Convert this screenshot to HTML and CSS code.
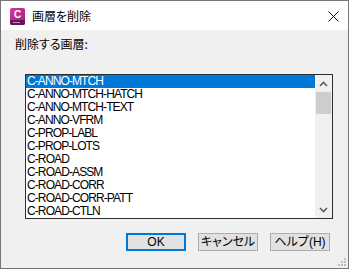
FILE: index.html
```html
<!DOCTYPE html>
<html lang="ja">
<head>
<meta charset="utf-8">
<title>画層を削除</title>
<link rel="stylesheet" href="styles.css">
</head>
<body>
<div class="window">
  <div class="titlebar">
    <svg class="app-icon" width="15" height="17" viewBox="0 0 15 17">
      <defs>
        <linearGradient id="g" x1="0" y1="0" x2="1" y2="1">
          <stop offset="0" stop-color="#d0399a"/>
          <stop offset="1" stop-color="#9b2379"/>
        </linearGradient>
      </defs>
      <rect x="0" y="0" width="15" height="17" rx="2" fill="url(#g)"/>
      <path d="M0 12 H15 V15 A2 2 0 0 1 13 17 H2 A2 2 0 0 1 0 15 Z" fill="#6e1558"/>
      <rect x="3" y="14" width="7" height="1" fill="#c98ab7"/>
      <text x="7.5" y="10" text-anchor="middle" class="icon-letter">C</text>
    </svg>
    <span class="title">画層を削除</span>
    <svg class="close" width="11" height="11" viewBox="0 0 11 11">
      <path d="M0.5 0.5 L10.5 10.5 M10.5 0.5 L0.5 10.5" stroke="#111" stroke-width="1" fill="none"/>
    </svg>
  </div>
  <div class="content">
    <div class="label">削除する画層:</div>
    <div class="listbox">
      <div class="rows">
        <div class="row selected">C-ANNO-MTCH</div>
        <div class="row">C-ANNO-MTCH-HATCH</div>
        <div class="row">C-ANNO-MTCH-TEXT</div>
        <div class="row">C-ANNO-VFRM</div>
        <div class="row">C-PROP-LABL</div>
        <div class="row">C-PROP-LOTS</div>
        <div class="row">C-ROAD</div>
        <div class="row">C-ROAD-ASSM</div>
        <div class="row">C-ROAD-CORR</div>
        <div class="row">C-ROAD-CORR-PATT</div>
        <div class="row">C-ROAD-CTLN</div>
      </div>
      <div class="scrollbar">
        <div class="sb-btn">
          <svg width="9" height="6" viewBox="0 0 9 6"><path d="M1 5 L4.5 1.5 L8 5" stroke="#606060" stroke-width="1.6" fill="none"/></svg>
        </div>
        <div class="sb-track"><div class="sb-thumb"></div></div>
        <div class="sb-btn">
          <svg width="9" height="6" viewBox="0 0 9 6"><path d="M1 1 L4.5 4.5 L8 1" stroke="#606060" stroke-width="1.6" fill="none"/></svg>
        </div>
      </div>
    </div>
    <div class="buttons">
      <div class="btn default">OK</div>
      <div class="btn">キャンセル</div>
      <div class="btn">ヘルプ(H)</div>
    </div>
  </div>
  <svg class="grip" width="9" height="9" viewBox="0 0 9 9">
    <rect x="6" y="0" width="2" height="2" fill="#bdbdbd"/>
    <rect x="3" y="3" width="2" height="2" fill="#bdbdbd"/>
    <rect x="6" y="3" width="2" height="2" fill="#bdbdbd"/>
    <rect x="0" y="6" width="2" height="2" fill="#bdbdbd"/>
    <rect x="3" y="6" width="2" height="2" fill="#bdbdbd"/>
    <rect x="6" y="6" width="2" height="2" fill="#bdbdbd"/>
  </svg>
</div>
</body>
</html>
```
FILE: styles.css
```css
* { box-sizing: border-box; }
html, body { margin: 0; padding: 0; background: #f0f0f0; }
body {
  font-family: "Noto Sans CJK JP", "Liberation Sans", sans-serif;
  font-size: 12px;
  color: #000;
}
.window {
  position: relative;
  width: 349px;
  height: 269px;
  border: 1px solid #777;
  display: flex;
  flex-direction: column;
  background: #f0f0f0;
}
.titlebar {
  height: 29px;
  background: #fff;
  display: flex;
  align-items: center;
  padding-left: 9px;
  padding-right: 9px;
}
.app-icon { flex: none; margin-top: 1px; }
.icon-letter {
  font-family: "Liberation Sans", sans-serif;
  font-weight: bold;
  font-size: 10px;
  fill: #fff;
}
.title {
  margin-left: 7px;
  font-size: 12px;
  font-feature-settings: "palt";
  line-height: 16px;
  flex: 1;
}
.close { flex: none; margin-top: 1px; }
.content {
  flex: 1;
  display: flex;
  flex-direction: column;
  padding: 6px 15px 0 14px;
}
.label {
  line-height: 16px;
  font-size: 12px;
  font-feature-settings: "palt";
}
.listbox {
  margin-top: 22px;
  margin-left: 10px;
  width: 308px;
  height: 145px;
  border: 1px solid #2e2e2e;
  background: #fff;
  display: flex;
}
.rows {
  flex: 1;
  display: flex;
  flex-direction: column;
}
.row {
  height: 13px;
  line-height: 13px;
  padding-left: 1px;
  font-family: "Liberation Sans", sans-serif;
  font-size: 12px;
  letter-spacing: -0.9px;
  white-space: nowrap;
  color: #000;
}
.row.selected {
  background: #0078d7;
  color: #fff;
}
.scrollbar {
  width: 17px;
  background: #f0f0f0;
  display: flex;
  flex-direction: column;
}
.sb-btn {
  height: 17px;
  display: flex;
  align-items: center;
  justify-content: center;
}
.sb-track { flex: 1; padding: 0 1px; }
.sb-thumb { height: 22px; background: #cdcdcd; }
.buttons {
  margin-top: 14px;
  display: flex;
  justify-content: flex-end;
  gap: 12px;
  padding-right: 3px;
}
.btn {
  width: 60px;
  height: 18px;
  background: #e1e1e1;
  border: 1px solid #adadad;
  display: flex;
  align-items: center;
  justify-content: center;
  font-family: "Liberation Sans", "Noto Sans CJK JP", sans-serif;
  font-size: 12px;
  font-feature-settings: "palt";
  line-height: 14px;
}
.btn.default { border: 2px solid #0078d7; }
.grip {
  position: absolute;
  right: 1px;
  bottom: 1px;
}
```
